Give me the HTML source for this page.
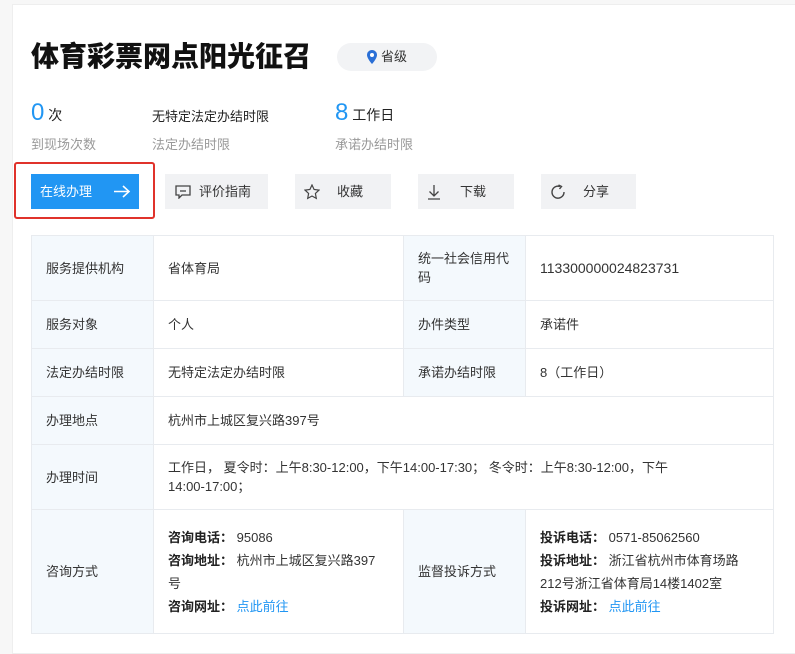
<!DOCTYPE html>
<html><head><meta charset="utf-8"><style>
*{margin:0;padding:0;box-sizing:border-box}
body{width:795px;height:645px;background:#f7f7f7;font-family:"Liberation Sans","Noto Sans CJK SC",sans-serif;color:#333;position:relative;overflow:hidden}
.card{position:absolute;left:12px;top:4px;width:790px;height:650px;background:#fff;border:1px solid #eee}
.abs{position:absolute}
h1{position:absolute;left:31px;top:38px;font-size:28px;font-weight:900;color:#111;letter-spacing:0px;line-height:38px;white-space:nowrap}
.tag{position:absolute;left:337px;top:43px;width:100px;height:28px;border-radius:14px;background:#f2f3f5;font-size:13px;color:#333;line-height:28px;padding-left:44px}
.num{font-size:24px;color:#2196f3;line-height:30px}
.sm{font-size:14px;color:#222}
.gr{font-size:13px;color:#999}
.btn{position:absolute;top:174px;height:35px;background:#f1f2f4;font-size:13px;color:#333;line-height:35px}
table{position:absolute;left:31px;top:235px;width:743px;border-collapse:collapse;font-size:13px;color:#333}
td{border:1px solid #e8ebef;padding:0 14px;vertical-align:middle;line-height:19px}
td.l{background:#f4f9fd;width:122px}
b{font-weight:bold;color:#222}
a{color:#2196f3;text-decoration:none}
</style></head><body>
<div class="card"></div>
<h1>体育彩票网点阳光征召</h1>
<div class="tag"><svg class="abs" style="left:30px;top:7px" width="10" height="14" viewBox="0 0 10 14"><path d="M5 0C2.2 0 0 2.2 0 5c0 3.5 5 9 5 9s5-5.5 5-9C10 2.2 7.8 0 5 0z" fill="#2a6fd6"/><circle cx="5" cy="5" r="2" fill="#fff"/></svg>省级</div>
<div class="abs" style="left:31px;top:98px"><span class="num">0</span><span class="sm"> 次</span></div>
<div class="abs gr" style="left:31px;top:134px">到现场次数</div>
<div class="abs sm" style="left:152px;top:106px;font-size:13px">无特定法定办结时限</div>
<div class="abs gr" style="left:152px;top:134px">法定办结时限</div>
<div class="abs" style="left:335px;top:98px"><span class="num">8</span><span class="sm"> 工作日</span></div>
<div class="abs gr" style="left:335px;top:134px">承诺办结时限</div>
<div class="abs" style="left:14px;top:162px;width:141px;height:57px;border:2px solid #e0322b;border-radius:3px"></div>
<div class="btn" style="left:31px;width:108px;background:#2196f3;color:#fff;padding-left:9px">在线办理<svg class="abs" style="left:82px;top:11px" width="18" height="13" viewBox="0 0 18 13"><path d="M1 6.5h15M10 1l6 5.5-6 5.5" stroke="#fff" stroke-width="1.6" fill="none"/></svg></div>
<div class="btn" style="left:165px;width:103px;padding-left:34px"><svg class="abs" style="left:10px;top:11px" width="16" height="14" viewBox="0 0 16 14"><path d="M1 1h14v9H7l-3 3V10H1z" stroke="#444" stroke-width="1.3" fill="none"/><path d="M5 6h6" stroke="#444" stroke-width="1.3"/></svg>评价指南</div>
<div class="btn" style="left:295px;width:96px;padding-left:42px"><svg class="abs" style="left:9px;top:10px" width="16" height="16" viewBox="0 0 16 16"><path d="M8 1l2.1 4.5 4.9.6-3.6 3.4.9 4.9L8 12l-4.3 2.4.9-4.9L1 6.1l4.9-.6z" stroke="#444" stroke-width="1.2" fill="none"/></svg>收藏</div>
<div class="btn" style="left:418px;width:96px;padding-left:42px"><svg class="abs" style="left:9px;top:10px" width="14" height="16" viewBox="0 0 14 16"><path d="M7 1v11M2.5 7.5L7 12l4.5-4.5M1 15h12" stroke="#444" stroke-width="1.3" fill="none"/></svg>下载</div>
<div class="btn" style="left:541px;width:95px;padding-left:42px"><svg class="abs" style="left:9px;top:10px" width="16" height="16" viewBox="0 0 16 16"><path d="M10 2.5A6 6 0 1 0 14 8" stroke="#444" stroke-width="1.4" fill="none"/><path d="M8.5 1l3 1.5-2 2.5" stroke="#444" stroke-width="1.4" fill="none"/></svg>分享</div>
<table>
<tr style="height:65px"><td class="l">服务提供机构</td><td style="width:250px">省体育局</td><td class="l">统一社会信用代<br>码</td><td style="font-size:14px">113300000024823731</td></tr>
<tr style="height:48px"><td class="l">服务对象</td><td>个人</td><td class="l">办件类型</td><td>承诺件</td></tr>
<tr style="height:48px"><td class="l">法定办结时限</td><td>无特定法定办结时限</td><td class="l">承诺办结时限</td><td>8（工作日）</td></tr>
<tr style="height:48px"><td class="l">办理地点</td><td colspan="3">杭州市上城区复兴路397号</td></tr>
<tr style="height:65px"><td class="l">办理时间</td><td colspan="3">工作日， 夏令时：上午8:30-12:00，下午14:00-17:30； 冬令时：上午8:30-12:00，下午<br>14:00-17:00；</td></tr>
<tr style="height:124px"><td class="l">咨询方式</td><td style="line-height:23px"><b>咨询电话：</b> 95086<br><b>咨询地址：</b> 杭州市上城区复兴路397<br>号<br><b>咨询网址：</b> <a>点此前往</a></td><td class="l">监督投诉方式</td><td style="line-height:23px"><b>投诉电话：</b> 0571-85062560<br><b>投诉地址：</b> 浙江省杭州市体育场路<br>212号浙江省体育局14楼1402室<br><b>投诉网址：</b> <a>点此前往</a></td></tr>
</table>
</body></html>
